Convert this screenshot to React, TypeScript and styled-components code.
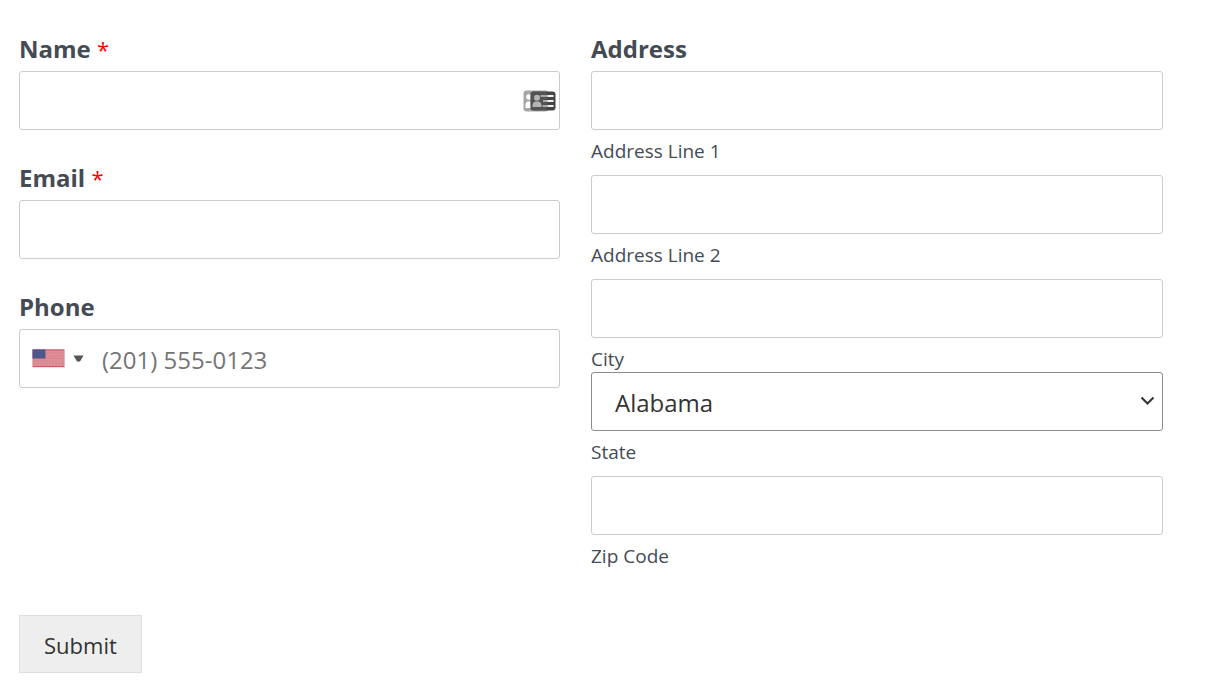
import React from "react";
import styled, { createGlobalStyle, css } from "styled-components";

const GlobalStyle = createGlobalStyle`
  *, *::before, *::after { box-sizing: border-box; }
  body {
    margin: 0;
    background: #fff;
    color: #444b54;
    font-family: "Segoe UI", "Open Sans", "Noto Sans", sans-serif;
  }
  button, input, select { font-family: inherit; margin: 0; }
`;

const Form = styled.form`
  padding: 33px 42px 8px 19px;
`;

const Columns = styled.div`
  display: grid;
  grid-template-columns: minmax(0, 541fr) minmax(0, 572fr);
  column-gap: 31px;
  align-items: start;
`;

const Column = styled.div`
  display: flex;
  flex-direction: column;
  gap: 32px;
`;

const labelText = css`
  display: block;
  padding: 0;
  margin: 0 0 6px;
  font-size: 24px;
  line-height: 32px;
  font-weight: 700;
`;

const Label = styled.label`
  ${labelText}
`;

const Fieldset = styled.fieldset`
  min-width: 0;
  margin: 0;
  padding: 0;
  border: 0;
`;

const Legend = styled.legend`
  ${labelText}
`;

const Required = styled.span`
  color: #f00;
  font-size: 22px;
  line-height: 1;
  font-weight: 400;
`;

const box = css`
  display: block;
  width: 100%;
  height: 59px;
  border: 1px solid #ccc;
  border-radius: 3px;
  background: #fff;
`;

const TextInput = styled.input`
  ${box}
  padding: 0 22px;
  font-size: 24px;
  color: #333;
  outline: none;
`;

const InputHolder = styled.div`
  position: relative;
`;

const CardIcon = styled.svg`
  position: absolute;
  right: 4px;
  top: 19px;
  width: 33px;
  height: 22px;
`;

const PhoneBox = styled.div`
  ${box}
  display: flex;
  align-items: stretch;
`;

const CountryButton = styled.button`
  display: flex;
  align-items: center;
  gap: 8px;
  padding: 0 12px;
  border: 0;
  background: transparent;
`;

const PhoneInput = styled.input`
  flex: 1;
  min-width: 0;
  padding: 2px 6px 0;
  border: 0;
  background: transparent;
  font-size: 24px;
  color: #333;
  outline: none;
  &::placeholder { color: #757575; opacity: 1; }
`;

const AddressPart = styled.div<{ $tight?: boolean }>`
  display: flex;
  flex-direction: column-reverse;
  margin-bottom: ${(p) => (p.$tight ? 0 : 11)}px;
  &:last-child { margin-bottom: 0; }
`;

const SubLabel = styled.label`
  padding-top: 8px;
  font-size: 19px;
  line-height: 26px;
`;

const SelectHolder = styled.div`
  position: relative;
`;

const Select = styled.select`
  ${box}
  appearance: none;
  padding: 2px 40px 0 23px;
  border-color: #8c8c8c;
  font-size: 24px;
  color: #333;
`;

const Chevron = styled.svg`
  position: absolute;
  right: 8px;
  top: 24px;
  pointer-events: none;
`;

const Submit = styled.button`
  display: block;
  height: 58px;
  margin-top: 46px;
  padding: 2px 24px 0;
  border: 1px solid #ddd;
  background: #eee;
  color: #333;
  font-size: 22px;
`;

function ContactCards() {
  return (
    <CardIcon viewBox="0 0 33 22" aria-hidden="true">
      <rect x="0.5" y="0.5" width="25" height="21" rx="3" fill="#a6a6a6" />
      <circle cx="6" cy="7" r="2.8" fill="#fff" />
      <path d="M2.5 18v-3.5q0-2 2-3h3q2 1 2 3V18z" fill="#fff" />
      <rect x="7.5" y="1.5" width="25" height="19" rx="3" fill="#444" />
      <rect x="7.5" y="1.5" width="17" height="19" rx="3" fill="#6a6a6a" opacity="0.4" />
      <circle cx="14" cy="7.8" r="3" fill="#b4b4b4" />
      <path d="M9.5 17v-2q0-2.5 2.500-3.500h4q2.500 1 2.500 3.500v2z" fill="#b4b4b4" />
      <path d="M17.500 6h7M20 11h5M19.500 16h5" stroke="#a8a8a8" strokeWidth="2" />
      <path d="M24.500 6h6M24.500 11h6M24.500 16h6" stroke="#f2f2f2" strokeWidth="2" />
    </CardIcon>
  );
}

function UsFlag() {
  const stripes = [0, 1, 2, 3, 4, 5, 6];
  return (
    <svg width="33" height="19" viewBox="0 0 33 19" aria-hidden="true">
      <rect width="33" height="19" fill="#e3e3e3" />
      <rect x="0.5" y="0.5" width="32" height="17.5" fill="#df8d97" />
      {stripes.map((i) => (
        <path key={i} d={`M1 ${1.5 + i * 2.6}h31`} stroke="#db828d" strokeWidth="1" />
      ))}
      <path d="M1 1h31M1 17.500h31" stroke="#cf5f6c" />
      <path d="M16 5.500h15M16 12h15M4 15h27" stroke="#e6a3ab" strokeDasharray="1 2" />
      <rect x="0.5" y="0.5" width="13" height="9" fill="#4d5488" />
      <path d="M2 3h11M3 5h10M2 7h11" stroke="#5a6294" strokeDasharray="1 1" />
    </svg>
  );
}

function AddressInput(props: { id: string; label: string; tight?: boolean }) {
  return (
    <AddressPart $tight={props.tight}>
      <SubLabel htmlFor={props.id}>{props.label}</SubLabel>
      <TextInput id={props.id} type="text" />
    </AddressPart>
  );
}

export default function App() {
  return (
    <>
      <GlobalStyle />
      <Form onSubmit={(e) => e.preventDefault()}>
        <Columns>
          <Column>
            <div>
              <Label htmlFor="name">Name <Required>*</Required></Label>
              <InputHolder>
                <TextInput id="name" type="text" required />
                <ContactCards />
              </InputHolder>
            </div>
            <div>
              <Label htmlFor="email">Email <Required>*</Required></Label>
              <TextInput id="email" type="email" required />
            </div>
            <div>
              <Label htmlFor="phone">Phone</Label>
              <PhoneBox>
                <CountryButton type="button" aria-label="Country: United States">
                  <UsFlag />
                  <svg width="11" height="7" viewBox="0 0 11 7" aria-hidden="true">
                    <path d="M0.500 0.500h10L7 6.500H4z" fill="#555" />
                  </svg>
                </CountryButton>
                <PhoneInput id="phone" type="tel" placeholder="(201) 555-0123" />
              </PhoneBox>
            </div>
          </Column>
          <Fieldset>
            <Legend>Address</Legend>
            <AddressInput id="line1" label="Address Line 1" />
            <AddressInput id="line2" label="Address Line 2" />
            <AddressInput id="city" label="City" tight />
            <AddressPart>
              <SubLabel htmlFor="state">State</SubLabel>
              <SelectHolder>
                <Select id="state" defaultValue="AL">
                  <option value="AL">Alabama</option>
                </Select>
                <Chevron width="15" height="10" viewBox="0 0 15 10" aria-hidden="true">
                  <path d="M1.500 1.500l6 6 6-6" fill="none" stroke="#333" strokeWidth="2" />
                </Chevron>
              </SelectHolder>
            </AddressPart>
            <AddressInput id="zip" label="Zip Code" />
          </Fieldset>
        </Columns>
        <Submit type="submit">Submit</Submit>
      </Form>
    </>
  );
}
